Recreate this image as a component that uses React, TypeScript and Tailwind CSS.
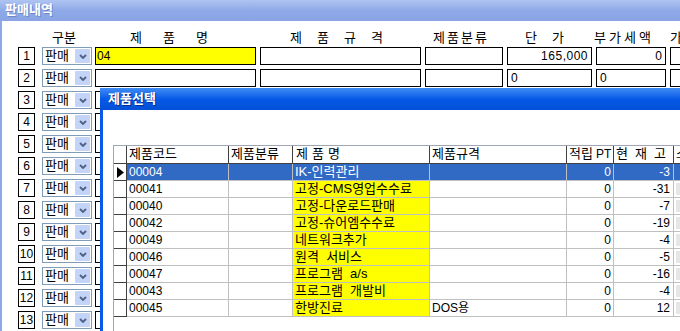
import React from "react";

type Item = {
  code: string;
  name: string;
  spec?: string;
  pt: string;
  stock: string;
};

const items: Item[] = [
  { code: "00004", name: "IK-인력관리", pt: "0", stock: "-3" },
  { code: "00041", name: "고정-CMS영업수수료", pt: "0", stock: "-31" },
  { code: "00040", name: "고정-다운로드판매", pt: "0", stock: "-7" },
  { code: "00042", name: "고정-슈어엠수수료", pt: "0", stock: "-19" },
  { code: "00049", name: "네트워크추가", pt: "0", stock: "-4" },
  { code: "00046", name: "원격 서비스", pt: "0", stock: "-5" },
  { code: "00047", name: "프로그램 a/s", pt: "0", stock: "-16" },
  { code: "00043", name: "프로그램 개발비", pt: "0", stock: "-4" },
  { code: "00045", name: "한방진료", spec: "DOS용", pt: "0", stock: "12" },
];

const lineNumbers = Array.from({ length: 13 }, (_, i) => i + 1);

function Chevron() {
  return (
    <svg width="8" height="5" viewBox="0 0 8 5">
      <path d="M1 1 L4 4 L7 1" fill="none" stroke="#4d6185" strokeWidth="1.8" />
    </svg>
  );
}

function Spaced({ chars, gap }: { chars: string[]; gap: string }) {
  return (
    <div className={`flex ${gap}`}>
      {chars.map((c, i) => (
        <span key={i}>{c}</span>
      ))}
    </div>
  );
}

function SalesRow({ n }: { n: number }) {
  const first = n === 1;
  const second = n === 2;
  return (
    <div className="flex h-[18px] items-stretch">
      <div className="ml-[16px] flex w-[17px] shrink-0 items-center justify-center border border-black bg-white">
        {n}
      </div>
      <div className="ml-[7px] flex w-[50px] shrink-0 items-center border border-[#7f9db9] bg-white pl-[2px]">
        <span className="flex-1 text-[13px]">판매</span>
        <div className="mr-[1px] flex h-[14px] w-[15px] items-center justify-center rounded-[1px] bg-[#c4d4f8]">
          <Chevron />
        </div>
      </div>
      <div
        className={`ml-[3px] flex w-[161px] shrink-0 items-center border border-black pl-[1px] ${
          first ? "bg-[#ffff00]" : "bg-white"
        }`}
      >
        {first ? "04" : ""}
      </div>
      <div className="ml-[4px] w-[161px] shrink-0 border border-black bg-white" />
      <div className="ml-[4px] w-[78px] shrink-0 border border-black bg-white" />
      <div className="ml-[4px] flex w-[85px] shrink-0 items-center border border-black bg-white px-[3px]">
        {first && <span className="ml-auto tracking-[0.5px]">165,000</span>}
        {second && <span>0</span>}
      </div>
      <div className="ml-[4px] flex w-[70px] shrink-0 items-center border border-black bg-white px-[3px]">
        {first && <span className="ml-auto">0</span>}
        {second && <span>0</span>}
      </div>
      <div className="ml-[4px] w-[60px] shrink-0 border border-black bg-white" />
    </div>
  );
}

export default function App() {
  return (
    <div className="relative h-[331px] w-[680px] overflow-hidden bg-white font-['Liberation_Sans','Noto_Sans_CJK_KR',sans-serif] text-[12px] leading-[14px] text-black">
      {/* 판매내역 window */}
      <div className="h-[21px] bg-gradient-to-b from-[#aec4f1] via-[#8ea9e7] to-[#8aa4e4] pl-[5px] pt-[3px] text-[13px] font-bold text-white [text-shadow:1px_1px_0_#6c86c8]">
        판매내역
      </div>
      <div className="h-[310px] border-l-2 border-[#8da8e6] bg-white">
        <div className="flex h-[26px] items-end pb-[2px] text-[13px] [&>div]:shrink-0">
          <div className="ml-[50px] w-[30px]">
            <Spaced chars={["구", "분"]} gap="gap-[0px]" />
          </div>
          <div className="ml-[48px] w-[90px]">
            <Spaced chars={["제", "품", "명"]} gap="gap-[21px]" />
          </div>
          <div className="ml-[70px] w-[110px]">
            <Spaced chars={["제", "품", "규", "격"]} gap="gap-[15px]" />
          </div>
          <div className="ml-[33px] w-[70px]">
            <Spaced chars={["제", "품", "분", "류"]} gap="gap-[2px]" />
          </div>
          <div className="ml-[22px] w-[45px]">
            <Spaced chars={["단", "가"]} gap="gap-[15px]" />
          </div>
          <div className="ml-[24px] w-[70px]">
            <Spaced chars={["부", "가", "세", "액"]} gap="gap-[3px]" />
          </div>
          <div className="ml-[6px]">가</div>
        </div>
        <div className="flex flex-col gap-[4px]">
          {lineNumbers.map((n) => (
            <SalesRow key={n} n={n} />
          ))}
        </div>
      </div>

      {/* 제품선택 dialog window */}
      <div className="absolute left-[100px] top-[88px] h-[260px] w-[600px] bg-white">
        <div className="h-[22px] bg-gradient-to-b from-[#3f8cf3] via-[#0758e8] to-[#0450d6] pl-[8px] pt-[4px] text-[13px] font-bold text-white [text-shadow:1px_1px_0_#0a2f8a]">
          제품선택
        </div>
        <div className="h-[238px] border-l-[3px] border-[#0a5ae6] bg-white pl-[10px] pt-[35px]">
          <div className="h-[220px] border-l border-t border-[#a0a6b8]">
            {/* header */}
            <div className="flex h-[18px] text-[13px] [&>div]:shrink-0">
              <div className="w-[13px] border-b border-r border-[#404040] bg-white" />
              <div className="w-[102px] border-b border-r border-[#404040] pl-[2px] pt-[1px]">제품코드</div>
              <div className="w-[64px] border-b border-r border-[#404040] pl-[2px] pt-[1px]">제품분류</div>
              <div className="w-[137px] border-b border-r border-[#404040] pl-[3px] pt-[1px]">
                <Spaced chars={["제", "품", "명"]} gap="gap-[4px]" />
              </div>
              <div className="w-[137px] border-b border-r border-[#404040] pl-[2px] pt-[1px]">제품규격</div>
              <div className="w-[47px] border-b border-r border-[#404040] pl-[2px] pt-[1px]">
                <span>적립</span>
                <span className="ml-[3px] text-[12px]">PT</span>
              </div>
              <div className="w-[60px] border-b border-r border-[#404040] pl-[2px] pt-[1px]">
                <Spaced chars={["현", "재", "고"]} gap="gap-[7px]" />
              </div>
              <div className="w-[40px] border-b border-[#404040] pl-[2px] pt-[1px]">소</div>
            </div>
            {/* rows */}
            {items.map((it, i) => {
              const sel = i === 0;
              const cell = sel ? "bg-[#316ac5] text-white" : "bg-white";
              return (
                <div key={it.code} className="flex h-[17px] [&>div]:shrink-0">
                  <div className="flex w-[13px] items-center justify-center border-b border-r border-[#404040] bg-white">
                    {sel && (
                      <svg width="7" height="11" viewBox="0 0 7 11">
                        <path d="M0 0 L7 5.5 L0 11 Z" fill="#000" />
                      </svg>
                    )}
                  </div>
                  <div className={`w-[102px] border-b border-r border-[#c0c0c0] pl-[2px] pt-[1px] ${cell}`}>{it.code}</div>
                  <div className={`w-[64px] border-b border-r border-[#c0c0c0] ${cell}`} />
                  <div
                    className={`w-[137px] whitespace-pre border-b border-r border-[#c0c0c0] pl-[2px] pt-[1px] text-[13px] ${
                      sel ? "bg-[#316ac5] text-white" : "bg-[#ffff00]"
                    }`}
                  >
                    {it.name.replace(/ /g, "  ")}
                  </div>
                  <div className={`w-[137px] border-b border-r border-[#c0c0c0] pl-[2px] pt-[1px] ${cell}`}>
                    {it.spec ?? ""}
                  </div>
                  <div className={`w-[47px] border-b border-r border-[#c0c0c0] pr-[2px] pt-[1px] text-right ${cell}`}>
                    {it.pt}
                  </div>
                  <div className={`w-[60px] border-b border-r border-[#c0c0c0] pr-[3px] pt-[1px] text-right ${cell}`}>
                    {it.stock}
                  </div>
                  <div className={`w-[40px] border-b border-[#c0c0c0] pl-[2px] ${sel ? "bg-[#316ac5]" : "bg-white"}`}>
                    {!sel && <div className="mt-[2px] h-[12px] bg-[#e6e6e6]" />}
                  </div>
                </div>
              );
            })}
          </div>
        </div>
      </div>
    </div>
  );
}
